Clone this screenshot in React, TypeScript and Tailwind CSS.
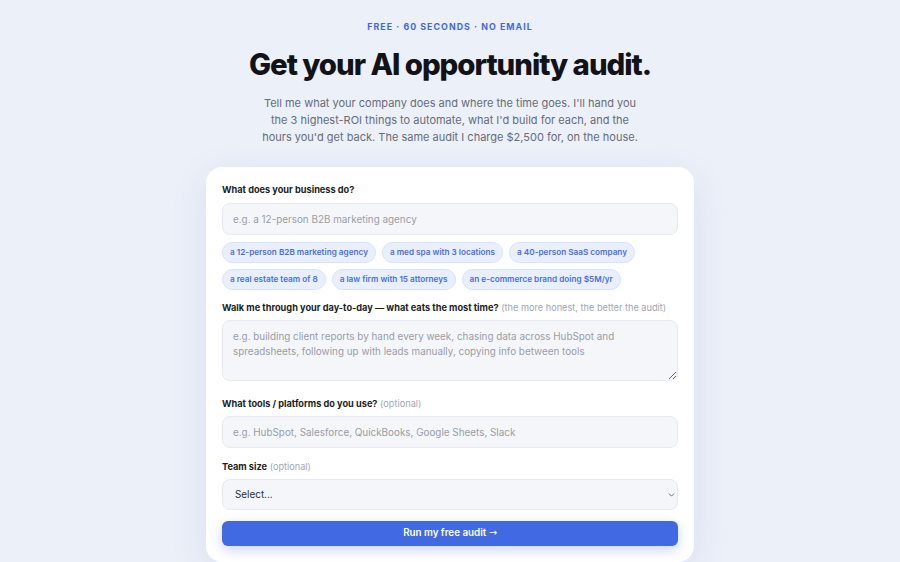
import { ChevronDown } from "lucide-react";

const examples = [
	"a 12-person B2B marketing agency",
	"a med spa with 3 locations",
	"a 40-person SaaS company",
	"a real estate team of 8",
	"a law firm with 15 attorneys",
	"an e-commerce brand doing $5M/yr",
];

const fieldClass =
	"w-full rounded-[8px] border border-[#e6e9f1] bg-[#f5f6fa] px-[10px] text-[9.9px] text-[#1f2937] placeholder:text-[#999da7] outline-none";

const Label = ({ text, hint }: { text: string; hint?: string }) => (
	<label className="block text-[9.2px] font-bold leading-[14px] text-[#1a1d24]">
		{text}
		{hint && <span className="font-normal text-[#a0a6b3]"> {hint}</span>}
	</label>
);

export default function App() {
	return (
		<div className="min-h-[562px] bg-[#ecf0f9] font-['Inter',sans-serif] flex flex-col items-center overflow-hidden">
			<p className="mt-[21px] text-[8.8px] font-bold tracking-[0.12em] leading-[12px] text-[#3f68e0]">
				FREE · 60 SECONDS · NO EMAIL
			</p>
			<h1 className="mt-[14px] text-[29.4px] leading-[36px] font-extrabold tracking-[-0.035em] text-[#111318]">
				Get your AI opportunity audit.
			</h1>
			<p className="mt-[12px] w-[378px] text-center text-[11px] leading-[17px] text-[#676c7a]">
				Tell me what your company does and where the time goes. I'll hand you
				the 3 highest-ROI things to automate, what I'd build for each, and the
				hours you'd get back. The same audit I charge $2,500 for, on the house.
			</p>

			<form className="mt-[21px] w-[488px] rounded-[16px] bg-white px-[16px] pt-[16px] pb-[16px] shadow-[0_10px_40px_rgba(40,60,130,0.09)]">
				<Label text="What does your business do?" />
				<input
					type="text"
					placeholder="e.g. a 12-person B2B marketing agency"
					className={`${fieldClass} mt-[6px] h-[32px]`}
				/>
				<div className="mt-[7px] flex flex-wrap gap-[6px]">
					{examples.map((ex) => (
						<button
							key={ex}
							type="button"
							className="h-[21px] rounded-full border border-[#d8e2fb] bg-[#e9effd] px-[7px] text-[8.2px] font-semibold text-[#4a6fe0]"
						>
							{ex}
						</button>
					))}
				</div>

				<div className="mt-[11px]">
					<Label
						text="Walk me through your day-to-day — what eats the most time?"
						hint="(the more honest, the better the audit)"
					/>
					<textarea
						rows={3}
						placeholder="e.g. building client reports by hand every week, chasing data across HubSpot and spreadsheets, following up with leads manually, copying info between tools"
						className={`${fieldClass} mt-[5px] block h-[61px] py-[8px] leading-[15px]`}
					/>
				</div>

				<div className="mt-[16px]">
					<Label text="What tools / platforms do you use?" hint="(optional)" />
					<input
						type="text"
						placeholder="e.g. HubSpot, Salesforce, QuickBooks, Google Sheets, Slack"
						className={`${fieldClass} mt-[5px] h-[32px]`}
					/>
				</div>

				<div className="mt-[12px]">
					<Label text="Team size" hint="(optional)" />
					<div className="relative mt-[5px]">
						<select
							defaultValue=""
							className={`${fieldClass} h-[31px] appearance-none px-[12px] text-[#2a2e38]`}
						>
							<option value="">Select...</option>
							<option>1–5</option>
							<option>6–20</option>
							<option>21–50</option>
							<option>51+</option>
						</select>
						<ChevronDown
							size={9}
							strokeWidth={2.2}
							className="pointer-events-none absolute right-[2px] top-1/2 -translate-y-1/2 text-[#444a57]"
						/>
					</div>
				</div>

				<button
					type="submit"
					className="mt-[11px] h-[25px] w-full rounded-[6px] bg-[#4169e1] text-[9.8px] font-semibold text-white shadow-[0_4px_12px_rgba(65,105,225,0.28)]"
				>
					Run my free audit{" "}
					<span className="font-['DejaVu_Sans',sans-serif] font-normal">→</span>
				</button>
			</form>
		</div>
	);
}
